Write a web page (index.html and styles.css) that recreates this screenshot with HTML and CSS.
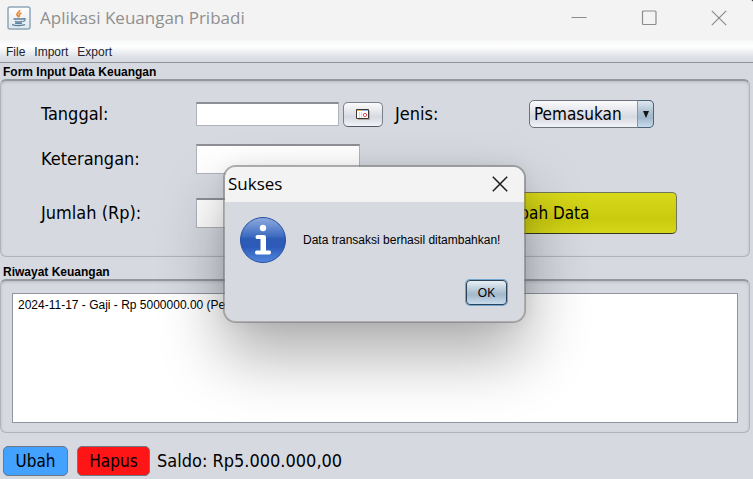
FILE: index.html
```html
<!DOCTYPE html>
<html lang="id">
<head>
<meta charset="utf-8">
<title>Aplikasi Keuangan Pribadi</title>
<link rel="stylesheet" href="styles.css">
</head>
<body>
<div class="window">
  <header class="titlebar">
    <svg class="app-icon" width="24" height="24" viewBox="0 0 24 24" aria-hidden="true">
      <defs><linearGradient id="cup-bg" x1="0" y1="0" x2="0" y2="1"><stop offset="0" stop-color="#fff"/><stop offset="1" stop-color="#dfe7ec"/></linearGradient></defs>
      <rect x="1" y="1" width="22" height="22" rx="2" fill="url(#cup-bg)" stroke="#8ea6b8" stroke-width="1.500"/>
      <path d="M12.500 4c1 2-3.500 3-2.500 5 .4 1 1.500 1.300 1.500 2.500M14.500 7c-2 .8-3 2-1.800 3.700" fill="none" stroke="#ea8a3a" stroke-width="1.800"/>
      <path d="M6.500 13h10M8 15.300c2 .8 5 .8 7 0M5 18.600c3 1.200 9 1.200 13 0M8 17.200c2 .5 5 .5 7 0M16 12.700c3-.8 3 2-.5 3" fill="none" stroke="#587f9f" stroke-width="1.300"/>
    </svg>
    <h1 class="app-title">Aplikasi Keuangan Pribadi</h1>
    <div class="window-controls">
      <button class="control" type="button" aria-label="Minimalkan"><svg width="16" height="16" viewBox="0 0 16 16"><path d="M.5 7.500h15"/></svg></button>
      <button class="control" type="button" aria-label="Maksimalkan"><svg width="16" height="16" viewBox="0 0 16 16"><rect x="1.500" y="1" width="13.500" height="13.500" rx="1"/></svg></button>
      <button class="control" type="button" aria-label="Tutup"><svg width="16" height="16" viewBox="0 0 16 16"><path d="M.8.8l14.400 14.400M15.200.8.8 15.200"/></svg></button>
    </div>
  </header>
  <nav class="menubar">
    <button class="menu" type="button">File</button>
    <button class="menu" type="button">Import</button>
    <button class="menu" type="button">Export</button>
  </nav>
  <main class="content">
    <section class="group">
      <h2 class="group-title">Form Input Data Keuangan</h2>
      <form class="panel entry-form">
        <label for="tanggal">Tanggal:</label>
        <div class="date-picker">
          <input class="field date-field" id="tanggal" type="text">
          <button class="date-button" type="button" aria-label="Pilih tanggal">
            <svg width="14" height="11" viewBox="0 0 14 11">
              <path d="M2 10.500h12M13.500 2v9" stroke="#b5a9a4"/>
              <path d="M.5.5h12v9H.5z" fill="#fff" stroke="#3a3634"/>
              <path d="M1 1.500h5" stroke="#f5b440"/><path d="M6 1.500h6" stroke="#8eb6ea"/>
              <path d="M3.500 3v6M5.500 3v6" stroke="#ddd"/>
              <circle cx="9" cy="6" r="1.700" fill="#fff" stroke="#e85555"/>
            </svg>
          </button>
        </div>
        <label for="jenis">Jenis:</label>
        <div class="combo">
          <select class="combo-box" id="jenis"><option>Pemasukan</option><option>Pengeluaran</option></select>
          <span class="combo-arrow"></span>
        </div>
        <label for="keterangan">Keterangan:</label>
        <input class="field text-field" id="keterangan" type="text">
        <label class="row-start" for="jumlah">Jumlah (Rp):</label>
        <input class="field text-field" id="jumlah" type="text">
        <button class="add-button" type="button">Tambah Data</button>
      </form>
    </section>
    <section class="group history">
      <h2 class="group-title">Riwayat Keuangan</h2>
      <div class="panel history-panel">
        <ul class="records"><li>2024-11-17 - Gaji - Rp 5000000.00 (Pemasukan)</li></ul>
      </div>
    </section>
    <footer class="actions">
      <button class="action edit" type="button">Ubah</button>
      <button class="action delete" type="button">Hapus</button>
      <span>Saldo: Rp5.000.000,00</span>
    </footer>
  </main>
</div>
<div class="dialog" role="alertdialog" aria-labelledby="dialog-title" aria-describedby="dialog-text">
  <div class="dialog-head">
    <h2 class="dialog-title" id="dialog-title">Sukses</h2>
    <button class="control dark" type="button" aria-label="Tutup dialog"><svg width="16" height="16" viewBox="0 0 16 16"><path d="M.8.8l14.400 14.400M15.200.8.8 15.200"/></svg></button>
  </div>
  <div class="dialog-body">
    <div class="message">
      <svg width="48" height="48" viewBox="0 0 48 48" aria-hidden="true">
        <defs>
          <linearGradient id="ball" x1="0" y1="0" x2="0" y2="1"><stop offset="0" stop-color="#8fabdf"/><stop offset=".42" stop-color="#3d6bc0"/><stop offset=".47" stop-color="#2d5bb5"/><stop offset=".65" stop-color="#2c5ab8"/><stop offset="1" stop-color="#5288de"/></linearGradient>
        </defs>
        <circle cx="24" cy="24" r="22.500" fill="url(#ball)" stroke="#2450a0"/>
        <circle cx="24" cy="12" r="3.200" fill="#fff"/>
        <path d="M18.500 19h6.500q2 0 2 2v13.500h3.500q1.500 0 1.500 2t-1.500 2h-13q-1.500 0-1.500-2t1.500-2h4V23h-3.500q-1.500 0-1.500-2t2-2z" fill="#fff"/>
      </svg>
      <p class="dialog-text" id="dialog-text">Data transaksi berhasil ditambahkan!</p>
    </div>
    <button class="ok-button" type="button">OK</button>
  </div>
</div>
</body>
</html>
```
FILE: styles.css
```css
* { box-sizing: border-box; }
html { background: #222; }
body { margin: 0; font: 12px/16px "Liberation Sans", Arial, sans-serif; color: #000; }
h1, h2, p, ul { margin: 0; padding: 0; }
button, input, select { font: inherit; color: inherit; margin: 0; padding: 0; }

.window {
  min-height: 100vh;
  display: flex;
  flex-direction: column;
  background: #d6d9e0;
  border-top-right-radius: 3px;
  overflow: hidden;
}
.titlebar {
  display: flex;
  align-items: center;
  height: 40px;
  padding: 0 26px 5px 7px;
  background: #f3f3f3;
}
.app-title {
  margin-left: 9px;
  font: 17px/24px "Open Sans", "Noto Sans", sans-serif;
  color: #8f8f8f;
}
.window-controls { display: flex; gap: 54px; margin-left: auto; }
.control { display: flex; border: 0; background: none; }
.control svg { fill: none; stroke: #8b8b8b; stroke-width: 1.2; }
.control.dark svg { stroke: #1b1b1b; stroke-width: 1.5; }

.menubar {
  display: flex;
  gap: 9px;
  height: 23px;
  padding: 1px 6px 0;
  background: linear-gradient(#f6f7f9, #fff 30%, #dfe2e8 75%, #d6d9e0);
  border-bottom: 1px solid #8e939c;
}
.menu { border: 0; background: none; color: #22222b; }

.content { flex: 1; display: flex; flex-direction: column; }
.group-title { height: 16px; padding: 0 3px; font-size: 12px; line-height: 18px; font-weight: bold; }
.panel {
  margin: 0 3px 0 0;
  border: 1px solid #b0b3b9;
  border-top: 2px solid #94979d;
  border-radius: 6px;
  background: #d6d9e0;
  box-shadow: inset 0 1px 3px #b8bbc2;
}
.entry-form {
  display: grid;
  grid-template-columns: 155px 199px 134px 148px;
  grid-template-rows: 28px 30px 46px;
  row-gap: 16px;
  align-items: center;
  padding: 19px 40px 20px;
}
.entry-form, .actions { font: 18px/24px "DejaVu Sans Condensed", "DejaVu Sans", sans-serif; }
.combo-box, .add-button, .action { font-size: 17px; }
.field { border: 1px solid #b0b3b9; border-top: 2px solid #8d8f94; background: #fff; }
.date-picker { display: flex; gap: 4px; align-items: center; }
.date-field { width: 143px; height: 24px; }
.date-button {
  display: flex;
  align-items: center;
  justify-content: center;
  width: 40px;
  height: 25px;
  border: 1px solid #7b808a;
  border-radius: 5px;
  border-bottom-color: #555963;
  background: linear-gradient(#fbfbfc, #dde0e6 50%, #d6d9e0 60%, #f2f3f7);
}
.date-button svg { fill: none; }
.combo { position: relative; width: 125px; height: 28px; }
.combo-box {
  appearance: none;
  width: 100%;
  height: 100%;
  padding: 0 4px;
  border: 1px solid #6c727c;
  border-radius: 5px;
  background: linear-gradient(#fbfbfc, #dde0e6 50%, #d6d9e0 60%, #f2f3f7);
}
.combo-arrow {
  position: absolute;
  inset: 0 0 0 auto;
  display: grid;
  place-items: center;
  width: 17px;
  border: 1px solid #49657d;
  border-left-color: #7f9ab0;
  border-radius: 0 5px 5px 0;
  background: linear-gradient(#dfe8f0, #a9bfd2 45%, #a2b9cd 65%, #c7dbea);
  pointer-events: none;
}
.combo-arrow::before {
  content: "";
  border: solid transparent;
  border-width: 7px 3px 0;
  border-top-color: #141414;
}
.text-field { width: 164px; height: 30px; }
.row-start { grid-column: 1; }
.add-button {
  grid-column: 3 / 5;
  height: 42px;
  margin-left: 6px;
  border: 1px solid #72765a;
  border-bottom-color: #33351f;
  border-radius: 5px;
  background: linear-gradient(#d8d81a, #cdce12 50%, #c9ca0e 65%, #d6d718);
}

.history { flex: 1; display: flex; flex-direction: column; margin-top: 6px; }
.history-panel { flex: 1; display: flex; padding: 12px 11px 9px; }
.records {
  flex: 1;
  padding: 3px 5px;
  border: 1px solid #8f949e;
  background: #fff;
  list-style: none;
}
.actions { display: flex; align-items: center; height: 46px; padding: 13px 3px 3px; }
.action {
  height: 30px;
  border: 1px solid #6e7784;
  border-radius: 5px;
}
.edit { width: 65px; margin-right: 9px; background: #43a1ff; }
.delete { width: 73px; margin-right: 7px; background: #ff1515; }

.dialog {
  position: absolute;
  top: 165px;
  left: 223px;
  width: 303px;
  border: 2px solid rgba(120, 120, 120, .6);
  border-radius: 13px;
  background: #d6d9e0;
  background-clip: padding-box;
  box-shadow: 0 32px 64px rgba(0, 0, 0, .33), 0 0 16px rgba(0, 0, 0, .06);
}
.dialog-head {
  display: flex;
  align-items: center;
  justify-content: space-between;
  height: 35px;
  padding: 0 16px 2px 3px;
  border-radius: 11px 11px 0 0;
  background: #f3f3f3;
}
.dialog-title { font: 17px/24px "Open Sans", "Noto Sans", sans-serif; }
.dialog-body { display: flex; flex-direction: column; padding: 14px 17px 16px 14px; }
.message { display: flex; align-items: center; gap: 16px; }
.dialog-text { white-space: nowrap; }
.ok-button {
  align-self: flex-end;
  width: 41px;
  height: 25px;
  margin-top: 16px;
  border: 1px solid #2b4257;
  border-radius: 4px;
  background: linear-gradient(#e8eff5, #adc1d2 48%, #a3b8cb 60%, #c9dcec);
  box-shadow: 0 0 0 1px #72a6d2;
}
```
